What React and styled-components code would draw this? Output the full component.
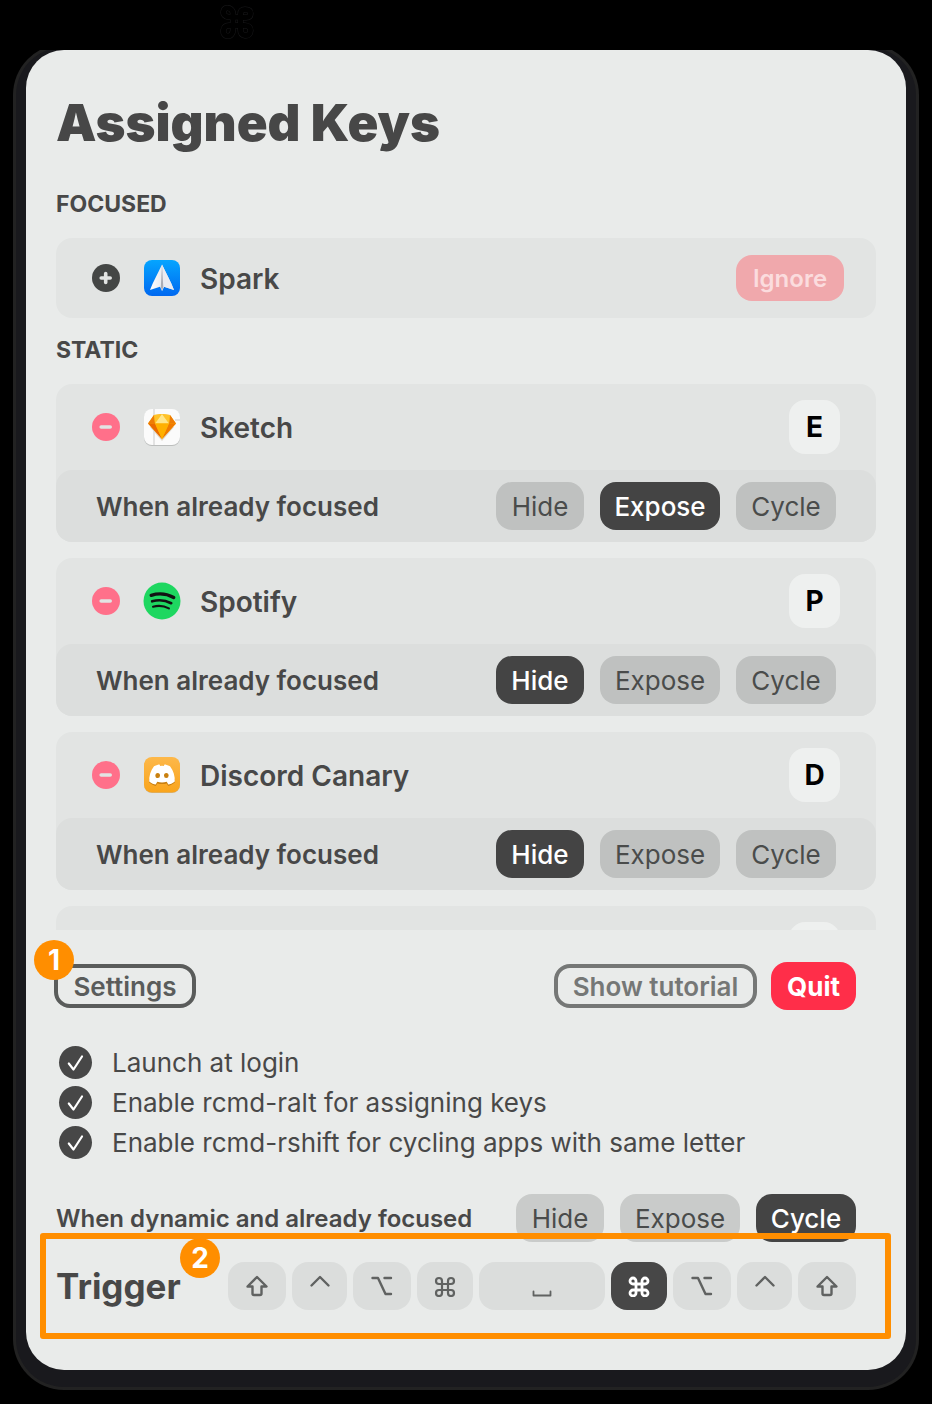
import React, { useState } from 'react';
import styled, { createGlobalStyle } from 'styled-components';

const GlobalStyle = createGlobalStyle`
  *, *::before, *::after { box-sizing: border-box; }
  body {
    margin: 0;
    background: #000;
    color: #484848;
    font-family: Inter, "Liberation Sans", sans-serif;
  }
  h1, h2, h3, p, ul { margin: 0; padding: 0; }
  ul { list-style: none; }
  button { font-family: inherit; border: 0; padding: 0; cursor: pointer; }
  svg { display: block; }
`;

const Page = styled.div`
  display: flex;
  flex-direction: column;
  padding: 0 26px 34px;
`;

const MenuBar = styled.header`
  height: 50px;
  padding: 5px 0 0 194px;
`;

const Card = styled.main`
  padding: 40px 30px 60px;
  border-radius: 38px;
  background: #e9ebea;
  box-shadow: 0 7px 0 10px #19191d, 0 7px 0 13px #222222;
  clip-path: inset(0 -20px -30px -20px);
`;

const Title = styled.h1`
  font-size: 51px;
  line-height: 66px;
  font-weight: 900;
  color: #474747;
`;

const SectionTitle = styled.h2`
  margin: ${(p) => (p.$tight ? 16 : 32)}px 0 18px;
  font-size: 23px;
  line-height: 32px;
  font-weight: 700;
`;

const FocusedRow = styled.div`
  display: flex;
  align-items: center;
  height: 80px;
  padding: 0 32px 0 36px;
  border-radius: 16px;
  background: #e2e4e3;
`;

const AppList = styled.ul`
  display: flex;
  flex-direction: column;
  gap: 16px;
  height: 546px;
  overflow: hidden;
`;

const AppItem = styled.li`
  flex: none;
  border-radius: 16px;
  background: #e2e4e3;
`;

const AppHead = styled.div`
  display: flex;
  align-items: center;
  height: 86px;
  padding: 0 36px;
`;

const RoundButton = styled.button`
  flex: none;
  display: grid;
  place-items: center;
  width: 28px;
  height: 28px;
  margin-right: 24px;
  border-radius: 50%;
  background: ${(p) => (p.$add ? '#444645' : '#ff708a')};
`;

const AppIcon = styled.svg`
  flex: none;
  width: 36px;
  height: 36px;
  margin-right: 20px;
  overflow: visible;
`;

const AppName = styled.h3`
  flex: 1;
  padding-top: 2px;
  font-size: 28px;
  line-height: 36px;
  font-weight: 600;
`;

const KeyCap = styled.button`
  width: 51px;
  height: 54px;
  border-radius: 16px;
  background: #eef0ef;
  color: #000;
  font-size: 28px;
  line-height: 36px;
  font-weight: 700;
`;

const IgnoreButton = styled.button`
  width: 108px;
  height: 46px;
  border-radius: 16px;
  background: #f0a8ac;
  color: #fbdcde;
  font-size: 24px;
  font-weight: 600;
`;

const BehaviourRow = styled.div`
  display: flex;
  align-items: center;
  justify-content: space-between;
  height: 72px;
  padding: 0 40px;
  border-radius: 16px;
  background: #dcdedd;
`;

const BehaviourLabel = styled.p`
  padding-top: 2px;
  font-size: ${(p) => (p.$small ? 24 : 26)}px;
  line-height: 36px;
  font-weight: 600;
`;

const Choices = styled.div`
  flex: none;
  display: grid;
  grid-template-columns: 88px 120px 100px;
  gap: 16px;
`;

const Choice = styled.button`
  height: 48px;
  border-radius: 16px;
  font-size: 26px;
  background: ${(p) => (p.$on ? '#444444' : p.$light ? '#c9cbca' : '#bfc1c0')};
  color: ${(p) => (p.$on ? '#ffffff' : '#4a4c4b')};
  font-weight: ${(p) => (p.$on ? 500 : 400)};
`;

const Footer = styled.footer`
  display: flex;
  flex-direction: column;
  padding-right: 20px;
`;

const Actions = styled.div`
  display: flex;
  align-items: center;
  gap: 14px;
  height: 48px;
  margin: 32px 0 32px -2px;
`;

const Spot = styled.div`
  position: relative;
  margin-right: auto;
`;

const Badge = styled.span`
  position: absolute;
  left: ${(p) => p.$x}px;
  top: -24px;
  display: grid;
  place-items: center;
  width: 40px;
  height: 40px;
  border-radius: 50%;
  background: #ff8e00;
  color: #fff;
  font-size: 28px;
  line-height: 40px;
  font-weight: 700;
`;

const OutlineButton = styled.button`
  width: ${(p) => p.$width}px;
  height: 44px;
  border: 4px solid currentColor;
  border-radius: 16px;
  background: transparent;
  color: ${(p) => (p.$muted ? '#757776' : '#5a5c5b')};
  font-size: 26px;
  font-weight: 600;
`;

const QuitButton = styled.button`
  width: 85px;
  height: 48px;
  border-radius: 16px;
  background: #ff2e49;
  color: #fff;
  font-size: 26px;
  font-weight: 700;
`;

const CheckRow = styled.label`
  display: flex;
  align-items: center;
  gap: 20px;
  min-height: 40px;
  padding-left: 3px;
  font-size: 26px;
  line-height: 38px;
`;

const CheckText = styled.span`
  padding-top: 2px;
`;

const CheckBox = styled.span`
  flex: none;
  display: grid;
  place-items: center;
  width: 33px;
  height: 33px;
  > * { grid-area: 1 / 1; }
  svg { pointer-events: none; }
  input:not(:checked) + svg { visibility: hidden; }
`;

const CheckInput = styled.input`
  appearance: none;
  width: 33px;
  height: 33px;
  margin: 0;
  border-radius: 50%;
  background: #474747;
`;

const DynamicRow = styled.div`
  display: flex;
  align-items: center;
  justify-content: space-between;
  height: 48px;
  margin: 32px 0 20px;
`;

const TriggerRow = styled.div`
  position: relative;
  display: flex;
  align-items: center;
  justify-content: space-between;
  height: 48px;
`;

const TriggerTitle = styled.h2`
  font-size: 35px;
  line-height: 48px;
  font-weight: 700;
`;

const Keys = styled.div`
  display: flex;
  gap: 6px;
`;

const Key = styled.button`
  display: grid;
  place-items: center;
  width: ${(p) => p.$width}px;
  height: 48px;
  border-radius: 16px;
  background: ${(p) => (p.$on ? '#474747' : '#dbdddc')};
  color: ${(p) => (p.$on ? '#ffffff' : '#606261')};
`;

const Highlight = styled.div`
  position: absolute;
  inset: -29px -35px -29px -16px;
  border: 6px solid #ff8e00;
  border-radius: 3px;
  pointer-events: none;
`;

const COMMAND = 'M7 7H4A3 3 0 1 1 7 4V16A3 3 0 1 1 4 13H16A3 3 0 1 1 13 16V4A3 3 0 1 1 16 7Z';

function MenuCommand() {
  const d = 'M13 12H9C5 12 3 9 3.500 6.500C4 3 8 2 10.500 4C12 5 13 7 13 9V24C13 28 11 31 8 31C4.500 31 3 28 3.500 25C4 22 6 20.500 9 20.500H25C29 20.500 30.500 23 30.500 25.500C30.500 29 28 31 25 30.500C22 30 20.500 28 20.500 25V9C20.500 6 22 4.500 25 4.500C29 4.500 30.500 6 30.500 8.500C30.500 11 29 12.500 26 12.500Z';
  return (
    <svg width="34" height="34" viewBox="0 0 34 34" fill="none" aria-hidden="true">
      <path d={d} stroke="#18181a" strokeWidth="6" />
      <path d={d} stroke="#000" strokeWidth="5" />
    </svg>
  );
}

function SparkIcon() {
  return (
    <AppIcon viewBox="0 0 36 36" aria-hidden="true">
      <defs>
        <linearGradient id="sparkSky" x1="0" y1="0" x2="0" y2="1">
          <stop offset="0" stopColor="#05a5ff" />
          <stop offset="1" stopColor="#0068f0" />
        </linearGradient>
        <linearGradient id="sparkLeft" x1="0" y1="0" x2="1" y2="0">
          <stop offset="0" stopColor="#ffffff" />
          <stop offset="1" stopColor="#d4d8e0" />
        </linearGradient>
      </defs>
      <rect width="36" height="36" rx="8" fill="url(#sparkSky)" />
      <path d="M18 4.500C14 13 9 22 6 30L16 26.800L18 31L20 26.800L30 30C27 22 22 13 18 4.500Z" fill="url(#sparkLeft)" />
      <path d="M18 4.500C22 13 27 22 30 30L20 26.800L18 31Z" fill="#e9ebf1" />
      <path d="M18 5L19.300 27L18 30.500L16.800 27Z" fill="#a9acb5" />
    </AppIcon>
  );
}

function SketchIcon() {
  return (
    <AppIcon viewBox="0 0 36 36" aria-hidden="true">
      <rect y="1" width="36" height="36" rx="8" fill="#bcbebd" />
      <rect width="36" height="36" rx="8" fill="#fbfbfb" />
      <path d="M10 0V36M31 11H36" stroke="#dcdcdc" strokeWidth="1.500" />
      <path d="M6 18L18 32L30 18Z" fill="#dcd6ce" />
      <path d="M10 6L18 5L26 6L32 14.500L18 30L4 14.500Z" fill="#fdad00" />
      <path d="M10 6L4 14.500H11Z" fill="#ee7c05" />
      <path d="M26 6L32 14.500H25Z" fill="#ee7c05" />
      <path d="M18 5L10 6L11 14.500Z" fill="#ffc329" />
      <path d="M18 5L26 6L25 14.500Z" fill="#ffc329" />
      <path d="M18 5L11 14.500H25Z" fill="#ffe68a" />
      <path d="M4 14.500H11L18 30Z" fill="#ea6a00" />
      <path d="M32 14.500H25L18 30Z" fill="#f07a00" />
      <path d="M11 14.500H25L18 30Z" fill="#ffb000" />
    </AppIcon>
  );
}

function SpotifyIcon() {
  return (
    <AppIcon viewBox="0 0 36 36" aria-hidden="true">
      <circle cx="18" cy="18" r="18.500" fill="#1ed760" />
      <g fill="none" stroke="#121212" strokeLinecap="round">
        <path d="M7.200 12.300C14 10.200 23 10.800 29.700 14.500" strokeWidth="3.400" />
        <path d="M8.200 18.300C14.500 16.500 21.500 17.200 27.200 20.200" strokeWidth="2.700" />
        <path d="M9 23.700C14.500 22.300 20 22.800 24.900 25.400" strokeWidth="2.100" />
      </g>
    </AppIcon>
  );
}

function DiscordIcon() {
  return (
    <AppIcon viewBox="0 0 36 36" aria-hidden="true">
      <defs>
        <linearGradient id="canary" x1="0" y1="0" x2="0" y2="1">
          <stop offset="0" stopColor="#fdb84a" />
          <stop offset="1" stopColor="#f9a41c" />
        </linearGradient>
      </defs>
      <rect y="1" width="36" height="35" rx="8" fill="#c9b593" />
      <rect width="36" height="35.500" rx="8" fill="url(#canary)" />
      <path d="M5.200 25.500C7.500 27.500 10 28.500 11.700 29L13.300 26.500Q18 27.500 22.700 26.500L24.300 29C26 28.500 28.500 27.500 30.800 25.500V22H5.200Z" fill="#c97f10" />
      <path d="M10 9.300C12.500 8 14.500 7.500 15.500 7.500L16.200 9Q18 8.700 19.800 9L20.500 7.500C21.500 7.500 23.500 8 26 9.300C29.500 14 31 19 30.800 24.500C28.500 26.500 26 27.300 24.300 27.500L22.700 24.800Q18 26 13.300 24.800L11.700 27.500C10 27.300 7.500 26.500 5.200 24.500C5 19 6.500 14 10 9.300Z" fill="#fff" />
      <ellipse cx="13.700" cy="18.500" rx="2.300" ry="2.600" fill="#c9800f" />
      <ellipse cx="22.300" cy="18.500" rx="2.300" ry="2.600" fill="#c9800f" />
    </AppIcon>
  );
}

function Sign({ add }) {
  return (
    <svg width="28" height="28" viewBox="0 0 28 28" fill="none" stroke="#e2e4e3" strokeLinecap="round" strokeWidth="3.600" aria-hidden="true">
      <path d={add ? 'M9.200 14H18.200M13.700 9.500V18.500' : 'M9.200 14H18.200'} />
    </svg>
  );
}

const GLYPHS = {
  shift: 'M12 3L21.500 12.500H16.500V19.500Q16.500 21 15 21H9Q7.500 21 7.500 19.500V12.500H2.500Z',
  control: 'M3.500 11.500L12 3L20.500 11.500',
  option: 'M2.500 4H8L15.500 20H21M14.500 4H21',
  space: 'M3.500 17.500V21.500H20.500V17.500',
};

function KeyGlyph({ name, bold }) {
  if (name === 'command') {
    return (
      <svg width="22" height="22" viewBox="-1 -2 22 22" fill="none" stroke="currentColor" strokeWidth={bold ? 2.8 : 2.2} aria-hidden="true">
        <path d={COMMAND} />
      </svg>
    );
  }
  return (
    <svg width="24" height="24" viewBox="0 0 24 24" fill="none" stroke="currentColor" strokeWidth={name === 'space' ? 1.8 : 2.4} strokeLinecap="round" strokeLinejoin="round" aria-hidden="true">
      <path d={GLYPHS[name]} />
    </svg>
  );
}

const CHOICES = ['Hide', 'Expose', 'Cycle'];

function BehaviourChoices({ initial, light, label }) {
  const [value, setValue] = useState(initial);
  return (
    <Choices role="group" aria-label={label}>
      {CHOICES.map((c) => (
        <Choice key={c} type="button" $on={c === value} $light={light} aria-pressed={c === value} onClick={() => setValue(c)}>
          {c}
        </Choice>
      ))}
    </Choices>
  );
}

const APPS = [
  { name: 'Sketch', letter: 'E', Icon: SketchIcon, action: 'Expose' },
  { name: 'Spotify', letter: 'P', Icon: SpotifyIcon, action: 'Hide' },
  { name: 'Discord Canary', letter: 'D', Icon: DiscordIcon, action: 'Hide' },
];

const OPTIONS = [
  'Launch at login',
  'Enable rcmd-ralt for assigning keys',
  'Enable rcmd-rshift for cycling apps with same letter',
];

const KEYS = [
  ['left shift', 'shift', 58],
  ['left control', 'control', 55],
  ['left option', 'option', 58],
  ['left command', 'command', 56],
  ['space', 'space', 126],
  ['right command', 'command', 56],
  ['right option', 'option', 58],
  ['right control', 'control', 55],
  ['right shift', 'shift', 58],
];

function AppEntry({ name, letter, Icon, action }) {
  return (
    <AppItem>
      <AppHead>
        <RoundButton type="button" aria-label={`Remove ${name}`}><Sign /></RoundButton>
        <Icon />
        <AppName>{name}</AppName>
        <KeyCap type="button">{letter}</KeyCap>
      </AppHead>
      <BehaviourRow>
        <BehaviourLabel>When already focused</BehaviourLabel>
        <BehaviourChoices initial={action} label={`${name} when already focused`} />
      </BehaviourRow>
    </AppItem>
  );
}

export default function App() {
  const [trigger, setTrigger] = useState('right command');
  return (
    <>
      <GlobalStyle />
      <Page>
        <MenuBar><MenuCommand /></MenuBar>
        <Card>
          <Title>Assigned Keys</Title>
          <SectionTitle>FOCUSED</SectionTitle>
          <FocusedRow>
            <RoundButton type="button" $add aria-label="Add Spark"><Sign add /></RoundButton>
            <SparkIcon />
            <AppName>Spark</AppName>
            <IgnoreButton type="button">Ignore</IgnoreButton>
          </FocusedRow>
          <SectionTitle $tight>STATIC</SectionTitle>
          <AppList>
            {APPS.map((app) => <AppEntry key={app.name} {...app} />)}
            <AppItem>
              <AppHead>
                <AppName />
                <KeyCap type="button" aria-label="Assigned key" />
              </AppHead>
            </AppItem>
          </AppList>
          <Footer>
            <Actions>
              <Spot>
                <OutlineButton type="button" $width={142}>Settings</OutlineButton>
                <Badge $x={-20}>1</Badge>
              </Spot>
              <OutlineButton type="button" $width={203} $muted>Show tutorial</OutlineButton>
              <QuitButton type="button">Quit</QuitButton>
            </Actions>
            {OPTIONS.map((text) => (
              <CheckRow key={text}>
                <CheckBox>
                  <CheckInput type="checkbox" defaultChecked />
                  <svg width="33" height="33" viewBox="0 0 33 33" fill="none" stroke="#fff" strokeWidth="2.200" strokeLinecap="round" strokeLinejoin="round" aria-hidden="true">
                    <path d="M9.800 17.500L14.500 23.500L23 10.500" />
                  </svg>
                </CheckBox>
                <CheckText>{text}</CheckText>
              </CheckRow>
            ))}
            <DynamicRow>
              <BehaviourLabel $small>When dynamic and already focused</BehaviourLabel>
              <BehaviourChoices initial="Cycle" light label="When dynamic and already focused" />
            </DynamicRow>
            <TriggerRow>
              <TriggerTitle>Trigger</TriggerTitle>
              <Keys role="group" aria-label="Trigger key">
                {KEYS.map(([id, glyph, width]) => (
                  <Key key={id} type="button" $width={width} $on={id === trigger} aria-label={id} aria-pressed={id === trigger} onClick={() => setTrigger(id)}>
                    <KeyGlyph name={glyph} bold={id === trigger} />
                  </Key>
                ))}
              </Keys>
              <Highlight />
              <Badge $x={124}>2</Badge>
            </TriggerRow>
          </Footer>
        </Card>
      </Page>
    </>
  );
}
